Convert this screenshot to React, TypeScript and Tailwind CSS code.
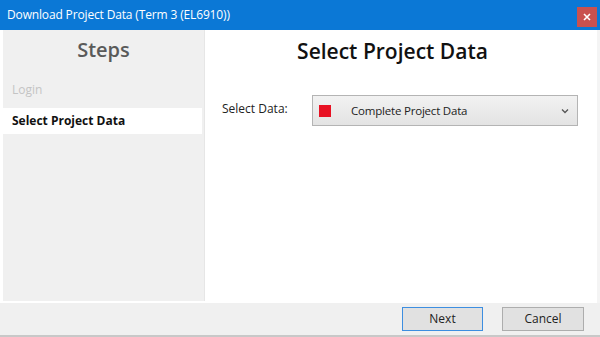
import React from "react";

export default function App() {
  return (
    <div
      className="w-[600px] h-[337px] flex flex-col bg-white overflow-hidden"
      style={{ fontFamily: '"Open Sans", "Noto Sans", sans-serif' }}
    >
      {/* Title bar */}
      <div className="h-[30px] bg-[#0b78d6] flex items-center justify-between pl-[7px] pr-[3px]">
        <span className="text-white text-[12px] tracking-[-0.15px]">Download Project Data (Term 3 (EL6910))</span>
        <div className="w-[20px] h-[20px] mt-[4px] bg-[#c9514f] flex items-center justify-center">
          <svg width="8" height="8" viewBox="0 0 8 8">
            <path d="M1 1 L7 7 M7 1 L1 7" stroke="#ffffff" strokeWidth="1.6" />
          </svg>
        </div>
      </div>

      {/* Body */}
      <div className="flex flex-1 min-h-0 border-r-[3px] border-[#f4f4f4]">
        {/* Left steps panel */}
        <div className="ml-[3px] mb-[2px] w-[202px] bg-[#f0f0f0] border-r border-[#e6e6e6] flex flex-col pt-[7px]">
          <div className="text-center text-[20px] text-[#5a5a5a] font-semibold leading-[26px] h-[32px]">Steps</div>
          <div className="mt-[12px] pl-[9px] text-[12px] text-[#c4c4c4] leading-[18px] h-[22px]">Login</div>
          <div className="mt-[5px] mr-[2px] bg-white h-[26px] flex items-center pl-[9px] text-[12px] font-bold text-[#111]">
            Select Project Data
          </div>
        </div>

        {/* Main content */}
        <div className="flex-1 flex flex-col pt-[6px]">
          <div className="text-center text-[21px] font-semibold text-[#111] leading-[30px] pr-[17px]">Select Project Data</div>
          <div className="flex items-center mt-[29px] pl-[17px]">
            <span className="text-[12px] text-[#222] w-[90px] -mt-[4px]">Select Data:</span>
            <div className="w-[266px] h-[31px] border border-[#b4b4b4] bg-gradient-to-b from-[#f2f2f2] to-[#e3e3e3] flex items-center pl-[6px] pr-[8px]">
              <div className="w-[12px] h-[12px] bg-[#e81123]" />
              <span className="ml-[20px] text-[11.5px] tracking-[-0.2px] text-[#222] flex-1">Complete Project Data</span>
              <svg width="8" height="6" viewBox="0 0 8 6">
                <path d="M1 1.5 L4 4.5 L7 1.5" fill="none" stroke="#555" strokeWidth="1.3" />
              </svg>
            </div>
          </div>
        </div>
      </div>

      {/* Footer */}
      <div className="h-[34px] bg-[#f0f0f0] border-b-2 border-[#c8c8c8] flex items-center justify-end pr-[16px] gap-[19px]">
        <button className="w-[81px] h-[24px] bg-[#e1e1e1] border border-[#3d8ee0] text-[12px] text-[#222]">Next</button>
        <button className="w-[82px] h-[24px] bg-[#e1e1e1] border border-[#adadad] text-[12px] text-[#222]">Cancel</button>
      </div>
    </div>
  );
}
